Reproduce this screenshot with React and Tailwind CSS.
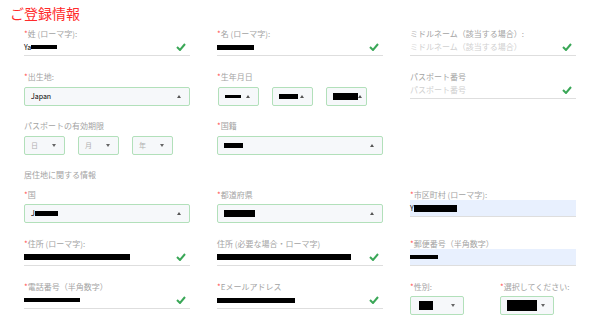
import React from "react";

const Check = () => (
  <svg width="10" height="8" viewBox="0 0 10 8" className="shrink-0">
    <polyline points="1,4 4,7 9,1" fill="none" stroke="#3aa757" strokeWidth="2" />
  </svg>
);

const Caret = ({ up }) =>
  up ? (
    <span className="w-0 h-0 border-l-[2px] border-r-[2px] border-b-[3px] border-l-transparent border-r-transparent border-b-[#555]" />
  ) : (
    <span className="w-0 h-0 border-l-[2.5px] border-r-[2.5px] border-t-[3px] border-l-transparent border-r-transparent border-t-[#666]" />
  );

const Bar = ({ w, h = 5 }) => (
  <span className="inline-block bg-black align-middle" style={{ width: w, height: h }} />
);

const Label = ({ req, children, className = "" }) => (
  <div className={"h-[10px] text-[8px] leading-[10px] text-[#a3a3a3] whitespace-nowrap " + className}>
    {req && <span className="text-[#ff5050]">*</span>}
    {children}
  </div>
);

const TextField = ({ label, req, children, placeholder, filled, check = true }) => (
  <div className="flex flex-col">
    <Label req={req}>{label}</Label>
    <div
      className={
        "h-[17px] flex items-center justify-between pr-[4px] border-b border-[#dedede] text-[7px] text-black " +
        (filled ? "bg-[#e8f0fe]" : "")
      }
    >
      <div className="flex items-center">
        {placeholder ? <span className="text-[#d0d0d0] text-[8px]">{placeholder}</span> : children}
      </div>
      {check && <Check />}
    </div>
  </div>
);

const Select = ({ children, up = true, className = "", muted }) => (
  <div
    className={
      "h-[19px] flex items-center justify-between px-[6px] pr-[8px] border border-[#b2e0ba] rounded-[2px] bg-[#f6f8fa] text-[7px] " +
      (muted ? "text-[#b0b0b0] " : "text-black ") +
      className
    }
  >
    <div className="flex items-center">{children}</div>
    <Caret up={up} />
  </div>
);

export default function App() {
  return (
    <div
      className="w-[600px] h-[327px] bg-white overflow-hidden"
      style={{ fontFamily: '"Noto Sans CJK JP", "Noto Sans", sans-serif' }}
    >
      <div className="h-[29px] pl-[10px] pt-[4px] text-[14px] leading-[18px] text-[#ff2b2b]">
        ご登録情報
      </div>
      <div className="px-[24px]">
        <div className="h-[43px] grid grid-cols-[166px_166px_166px] gap-x-[27px] items-start">
          <TextField label="姓 (ローマ字):" req>
            <span>Ya</span>
            <Bar w={26} h={4} />
          </TextField>
          <TextField label="名 (ローマ字):" req>
            <Bar w={37} />
          </TextField>
          <TextField label="ミドルネーム（該当する場合）:" placeholder="ミドルネーム（該当する場合）" />
        </div>

        <div className="h-[49px] grid grid-cols-[166px_166px_166px] gap-x-[27px] items-start">
          <div className="flex flex-col gap-[5px]">
            <Label req>出生地:</Label>
            <Select>Japan</Select>
          </div>
          <div className="flex flex-col gap-[5px]">
            <Label req>生年月日</Label>
            <div className="flex gap-[13px] pl-[1px]">
              <Select className="w-[41px] px-[4px] pr-[8px]"><Bar w={16} h={3} /></Select>
              <Select className="w-[41px] px-[4px] pr-[8px]"><Bar w={19} h={5} /></Select>
              <Select className="w-[41px] px-[2px] pr-[6px]"><Bar w={25} h={7} /></Select>
            </div>
          </div>
          <TextField label="パスポート番号" placeholder="パスポート番号" />
        </div>

        <div className="h-[49px] grid grid-cols-[166px_166px_166px] gap-x-[27px] items-start">
          <div className="flex flex-col gap-[5px]">
            <Label>パスポートの有効期限</Label>
            <div className="flex gap-[13px]">
              <Select className="w-[41px]" up={false} muted>日</Select>
              <Select className="w-[41px]" up={false} muted>月</Select>
              <Select className="w-[41px]" up={false} muted>年</Select>
            </div>
          </div>
          <div className="flex flex-col gap-[5px]">
            <Label req>国籍</Label>
            <Select><Bar w={19} h={5} /></Select>
          </div>
          <div />
        </div>

        <div className="h-[20px]">
          <Label>居住地に関する情報</Label>
        </div>

        <div className="h-[49px] grid grid-cols-[166px_166px_166px] gap-x-[27px] items-start">
          <div className="flex flex-col gap-[4px]">
            <Label req>国</Label>
            <Select><span>J</span><Bar w={23} h={5} /></Select>
          </div>
          <div className="flex flex-col gap-[4px]">
            <Label req>都道府県</Label>
            <Select><Bar w={31} h={7} /></Select>
          </div>
          <TextField label="市区町村 (ローマ字):" req filled check={false}>
            <span>Y</span>
            <Bar w={43} h={7} />
          </TextField>
        </div>

        <div className="h-[43px] grid grid-cols-[166px_166px_166px] gap-x-[27px] items-start">
          <TextField label="住所 (ローマ字):" req>
            <Bar w={106} h={6} />
          </TextField>
          <TextField label="住所 (必要な場合・ローマ字)">
            <Bar w={134} h={6} />
          </TextField>
          <TextField label="郵便番号（半角数字）" req filled check={false}>
            <Bar w={28} h={4} />
          </TextField>
        </div>

        <div className="grid grid-cols-[166px_166px_166px] gap-x-[27px] items-start">
          <TextField label="電話番号（半角数字）" req>
            <Bar w={56} h={4} />
          </TextField>
          <TextField label="Eメールアドレス" req>
            <Bar w={78} h={5} />
          </TextField>
          <div className="grid grid-cols-[54px_54px] gap-x-[36px]">
            <div className="flex flex-col gap-[4px]">
              <Label req>性別:</Label>
              <Select up={false} className="px-[8px]"><Bar w={14} h={9} /></Select>
            </div>
            <div className="flex flex-col gap-[4px]">
              <Label req>選択してください:</Label>
              <Select up={false} className="px-0"><Bar w={30} h={11} /></Select>
            </div>
          </div>
        </div>
      </div>
    </div>
  );
}
